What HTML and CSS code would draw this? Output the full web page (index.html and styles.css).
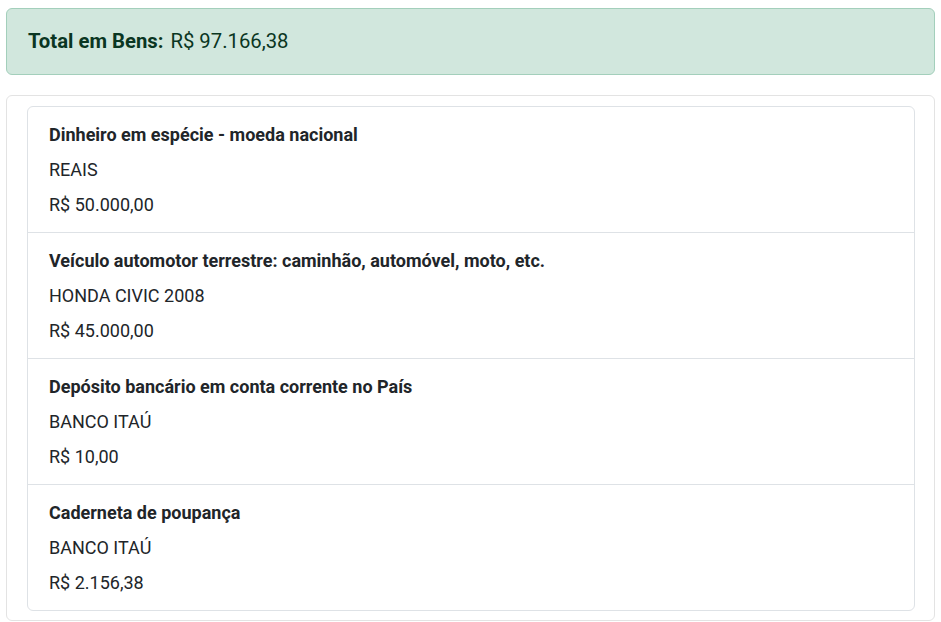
FILE: index.html
```html
<!DOCTYPE html>
<html lang="pt-BR">
<head>
<meta charset="utf-8">
<link rel="stylesheet" href="styles.css">
</head>
<body>
<div class="page">
  <div class="alert"><strong class="label">Total em Bens:</strong> R$ 97.166,38</div>
  <div class="card">
    <div class="card-body">
      <ul class="list">
        <li class="item">
          <div class="title">Dinheiro em espécie - moeda nacional</div>
          <div class="line">REAIS</div>
          <div class="line">R$ 50.000,00</div>
        </li>
        <li class="item">
          <div class="title">Veículo automotor terrestre: caminhão, automóvel, moto, etc.</div>
          <div class="line">HONDA CIVIC 2008</div>
          <div class="line">R$ 45.000,00</div>
        </li>
        <li class="item">
          <div class="title">Depósito bancário em conta corrente no País</div>
          <div class="line">BANCO ITAÚ</div>
          <div class="line">R$ 10,00</div>
        </li>
        <li class="item">
          <div class="title">Caderneta de poupança</div>
          <div class="line">BANCO ITAÚ</div>
          <div class="line">R$ 2.156,38</div>
        </li>
      </ul>
    </div>
  </div>
</div>
</body>
</html>
```
FILE: styles.css
```css
* { box-sizing: border-box; }
html, body { margin: 0; padding: 0; background: #fff; }
body {
  font-family: Roboto, "Liberation Sans", sans-serif;
  font-size: 18px;
  color: #212529;
}
.page {
  padding: 8px 6px 0;
}
.alert {
  background: #d1e7dd;
  border: 1px solid #a3cfbb;
  color: #0a3622;
  border-radius: 6px;
  padding: 17px 21px 18px;
  font-size: 20.3px;
  line-height: 30px;
  margin-bottom: 20px;
}
.label { font-weight: 700; margin-right: 2px; }
.card {
  border: 1px solid #e3e3e3;
  border-radius: 6px;
  background: #fff;
}
.card-body {
  padding: 10px 19px 9px 20px;
}
.list {
  list-style: none;
  margin: 0;
  padding: 0;
  border: 1px solid #dee2e6;
  border-radius: 6px;
}
.item {
  padding: 14px 21px 14px;
  display: flex;
  flex-direction: column;
  gap: 8px;
  border-bottom: 1px solid #dee2e6;
}
.item:last-child { border-bottom: none; }
.title, .line { line-height: 27px; }
.title { font-weight: 700; }
```
